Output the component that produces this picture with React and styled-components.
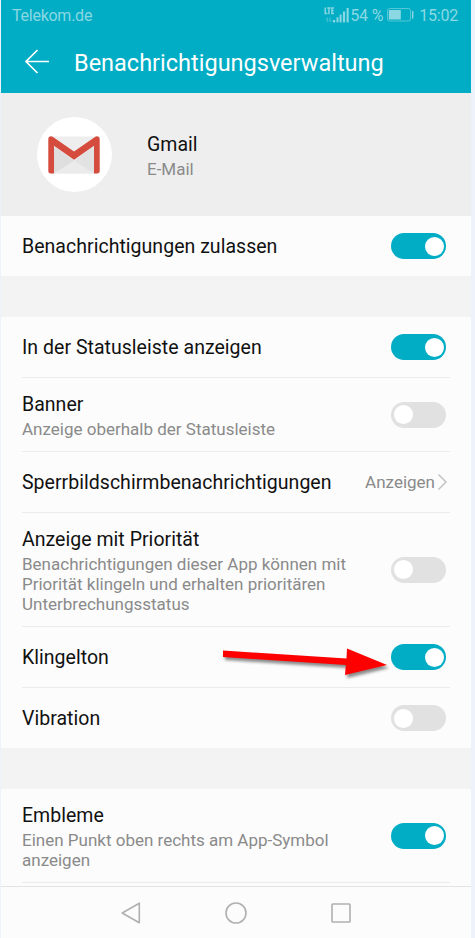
import React from 'react';
import styled, { createGlobalStyle } from 'styled-components';

const settings = [
    { title: 'In der Statusleiste anzeigen', on: true, height: 61 },
    { title: 'Banner', text: 'Anzeige oberhalb der Statusleiste', on: false, height: 74 },
    { title: 'Sperrbildschirmbenachrichtigungen', value: 'Anzeigen', height: 61 },
    {
        title: 'Anzeige mit Priorität',
        text: 'Benachrichtigungen dieser App können mit Priorität klingeln und erhalten prioritären Unterbrechungsstatus',
        on: false,
        height: 114,
    },
    { title: 'Klingelton', on: true, height: 61, marked: true },
    { title: 'Vibration', on: false, height: 60, last: true },
];

function Signal() {
    return <svg width="26" height="18" viewBox="0 0 26 18">
        <g stroke="currentColor" strokeWidth="1.4" fill="none">
            <path d="M1.2 0.5V6.5H3.4M3.2 1H6.6M4.9 1V7.2M10 1H7.9V6.5H10M7.9 3.7H9.6" />
            <path d="M3.5 15V10.5M2.3 12.5L3.5 10.5M6 10.5V15M7.2 13L6 15" opacity="0.4" />
        </g>
        <g fill="currentColor">
            <rect x="8.8" y="13" width="2.4" height="2.4" />
            <rect x="12.5" y="10.3" width="2" height="5.1" />
            <rect x="15.6" y="7.6" width="2" height="7.8" />
            <rect x="18.9" y="4.5" width="2.2" height="10.9" />
            <rect x="22.6" y="1" width="2.1" height="14.4" />
        </g>
    </svg>;
}

function Battery() {
    return <svg width="28" height="15" viewBox="0 0 28 15">
        <rect x="0.5" y="0.5" width="23" height="12.5" rx="2" fill="none" stroke="currentColor" opacity="0.6" />
        <rect x="1.8" y="2" width="12" height="9.5" fill="currentColor" />
        <rect x="25" y="3" width="1.4" height="7.5" fill="currentColor" />
    </svg>;
}

function GmailLogo() {
    return <svg width="52" height="38" viewBox="0 0 52 38">
        <path d="M2 0.5H50V37.5H2Z" fill="#eeeeee" />
        <path d="M6 10L26 25L6 37.5Z" fill="#dedede" />
        <path d="M6 12L46 37.5V10L26 25Z" fill="#e2e2e2" />
        <path d="M6 37.5L26 25L46 37.5Z" fill="#ebebeb" />
        <path d="M3 37.5C1.2 37.5 0.3 36.5 0.3 35V3C0.3 0.6 3 -0.4 5 1L26 15.6L47 1C49 -0.4 51.7 0.6 51.7 3V35C51.7 36.5 50.8 37.5 49 37.5H46V9.8L26 23.8L6 9.8V37.5Z" fill="#d54c3f" />
    </svg>;
}

function SettingRow({ title, text, on, value, height, last, marked }) {
    return <Row $height={height} $last={last}>
        <Texts $shift={text ? 3 : 2}>
            <Title>{title}</Title>
            {text && <Description>{text}</Description>}
        </Texts>
        {value
            ? <Value>
                {value}
                <svg width="11" height="18" viewBox="0 0 11 18">
                    <path d="M1.5 1.5L9 9L1.5 16.5" fill="none" stroke="#c4c4c4" strokeWidth="1.5" />
                </svg>
            </Value>
            : <Switch $on={on}><Knob /></Switch>}
        {marked && <Pointer width="176" height="40" viewBox="0 0 176 40">
            <path d="M3 5.5L126.5 13.5L127 3.5L167 20L125 30L125.8 20L3 12Z" fill="#ff0000" />
        </Pointer>}
    </Row>;
}

function App() {
    return <Phone>
        <GlobalStyle />
        <Header>
            <StatusBar>
                <Carrier>Telekom.de</Carrier>
                <StatusInfo>
                    <Signal />
                    <Percent>54 %</Percent>
                    <Battery />
                    <Clock>15:02</Clock>
                </StatusInfo>
            </StatusBar>
            <TitleBar>
                <svg width="26" height="26" viewBox="0 0 26 26">
                    <path d="M25 12.5H2M13.5 1L2 12.5L13.5 24" fill="none" stroke="#fff" strokeWidth="1.7" />
                </svg>
                <h1>Benachrichtigungsverwaltung</h1>
            </TitleBar>
        </Header>
        <AppInfo>
            <AppIcon><GmailLogo /></AppIcon>
            <AppName>
                <Title>Gmail</Title>
                <Description>E-Mail</Description>
            </AppName>
        </AppInfo>
        <Section>
            <SettingRow title="Benachrichtigungen zulassen" on height={60} last />
        </Section>
        <Gap />
        <Section>
            {settings.map((item) => <SettingRow key={item.title} {...item} />)}
        </Section>
        <Gap />
        <Section>
            <SettingRow title="Embleme" text="Einen Punkt oben rechts am App-Symbol anzeigen" on height={94} />
        </Section>
        <NavBar>
            <svg width="20" height="22" viewBox="0 0 20 22">
                <path d="M18.3 1.2V20.8L1.2 11Z" />
            </svg>
            <svg width="22" height="22" viewBox="0 0 22 22">
                <circle cx="11" cy="11" r="10" />
            </svg>
            <svg width="20" height="20" viewBox="0 0 20 20">
                <rect x="1" y="1" width="18" height="18" rx="0.8" />
            </svg>
        </NavBar>
    </Phone>;
}

const GlobalStyle = createGlobalStyle`
    body {
        margin: 0;
        background-color: #edf2fb;
        font-family: Roboto, "Liberation Sans", sans-serif;
    }
    * {
        box-sizing: border-box;
    }
    svg {
        display: block;
        flex: none;
    }
`;

const Phone = styled.div`
    display: flex;
    flex-direction: column;
    width: 470px;
    height: 938px;
    margin-left: 1px;
    overflow: hidden;
    background-color: #fcfcfc;
`;

const Header = styled.header`
    height: 93px;
    background-color: #00adc5;
    color: #fff;
`;

const StatusBar = styled.div`
    display: flex;
    justify-content: space-between;
    height: 31px;
    padding: 0 13px 0 11px;
    font-size: 16px;
    line-height: 31px;
    color: #8bd8e3;
`;

const Carrier = styled.span`
    letter-spacing: -0.25px;
`;

const StatusInfo = styled.div`
    display: flex;
    align-items: center;
`;

const Percent = styled.span`
    width: 37px;
    letter-spacing: -0.1px;
    white-space: nowrap;
`;

const Clock = styled.span`
    margin-left: 4px;
    letter-spacing: -0.2px;
`;

const TitleBar = styled.div`
    display: flex;
    align-items: center;
    gap: 24px;
    height: 62px;
    padding-left: 23px;
    h1 {
        margin: 0;
        padding-top: 1px;
        font-size: 23.5px;
        font-weight: 400;
    }
`;

const AppInfo = styled.div`
    display: flex;
    align-items: center;
    gap: 35px;
    height: 123px;
    padding-left: 36px;
    background-color: #eeeeee;
`;

const AppIcon = styled.div`
    display: flex;
    justify-content: center;
    align-items: center;
    width: 75px;
    height: 75px;
    padding-right: 1px;
    border-radius: 50%;
    background-color: #fff;
`;

const AppName = styled.div`
    padding-top: 3px;
`;

const Section = styled.div`
    padding: 0 21px;
`;

const Gap = styled.div`
    height: 41px;
    background-color: #f3f3f3;
`;

const Row = styled.div`
    position: relative;
    display: flex;
    justify-content: space-between;
    align-items: center;
    height: ${(props) => props.$height}px;
    padding-right: 4px;
    border-bottom: ${(props) => (props.$last ? 'none' : '1px solid #ebebeb')};
`;

const Texts = styled.div`
    width: 335px;
    padding-top: ${(props) => props.$shift}px;
`;

const Title = styled.div`
    font-size: 19.5px;
    line-height: 24px;
    letter-spacing: 0.03px;
    color: #111;
    white-space: nowrap;
`;

const Description = styled.div`
    margin-top: 2px;
    font-size: 17px;
    line-height: 20px;
    color: #8a8a8a;
`;

const Value = styled.div`
    display: flex;
    align-items: center;
    gap: 2px;
    margin-right: -2px;
    font-size: 17px;
    color: #8a8a8a;
`;

const Switch = styled.div`
    display: flex;
    flex: none;
    align-items: center;
    justify-content: ${(props) => (props.$on ? 'flex-end' : 'flex-start')};
    width: 55px;
    height: 26px;
    padding: 0 2px 0 3px;
    border-radius: 13px;
    background-color: ${(props) => (props.$on ? '#00adc5' : '#e1e1e1')};
`;

const Knob = styled.div`
    width: 19px;
    height: 19px;
    border-radius: 50%;
    background-color: #fff;
`;

/* red arrow lying over the row, ends at the switch */
const Pointer = styled.svg`
    position: absolute;
    top: 18px;
    left: 198px;
    filter: drop-shadow(2px 3px 1.5px rgba(0, 0, 0, 0.45));
`;

const NavBar = styled.nav`
    display: flex;
    justify-content: center;
    align-items: center;
    gap: 84px;
    height: 52px;
    margin-top: auto;
    border-top: 1px solid #e3e3e3;
    svg {
        fill: none;
        stroke: #b0b0b0;
        stroke-width: 1.6;
        stroke-linejoin: round;
    }
`;

export default App;
